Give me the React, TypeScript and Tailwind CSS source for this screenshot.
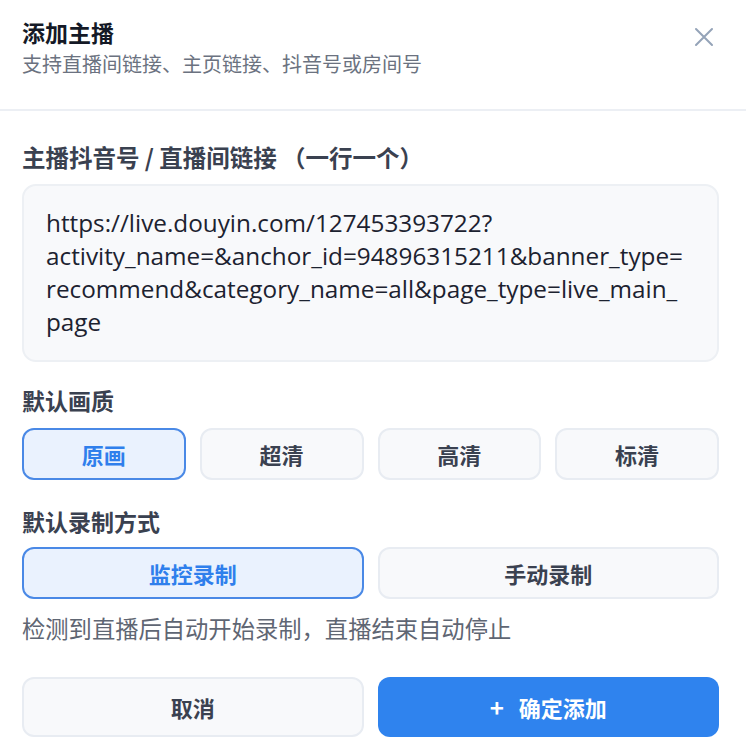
import React from "react";

const cjk = { fontFamily: '"Noto Sans CJK SC", "Noto Sans", sans-serif' };
const mono = { fontFamily: '"Open Sans", "Noto Sans CJK SC", sans-serif' };

function Opt({ label, active }: { label: string; active?: boolean }) {
  return (
    <button
      className={
        active
          ? "h-[52px] rounded-[12px] border-2 border-[#4a89e6] bg-[#eaf2fe] text-[#2f7fec] text-[22px] font-bold leading-none flex items-center justify-center"
          : "h-[52px] rounded-[12px] border-2 border-[#e8ecf2] bg-[#f8f9fb] text-[#3a4150] text-[22px] font-bold leading-none flex items-center justify-center"
      }
    >
      {label}
    </button>
  );
}

export default function App() {
  const lines = [
    "https://live.douyin.com/127453393722?",
    "activity_name=&anchor_id=94896315211&banner_type=",
    "recommend&category_name=all&page_type=live_main_",
    "page",
  ];
  return (
    <div className="w-[746px] h-[754px] bg-white flex flex-col" style={cjk}>
      <div className="flex justify-between pl-[22px] pr-[32px] pt-[17px] pb-[31px] border-b-2 border-[#eceff4]">
        <div className="flex flex-col">
          <div className="text-[23px] leading-[30px] font-bold text-[#141926]">添加主播</div>
          <div className="mt-[3px] text-[20px] leading-[28px] text-[#6b7280]">
            支持直播间链接、主页链接、抖音号或房间号
          </div>
        </div>
        <div className="pt-[10px]">
          <svg width="20" height="20" viewBox="0 0 20 20" fill="none">
            <path d="M2 2 L18 18 M18 2 L2 18" stroke="#94a3b8" strokeWidth="2" strokeLinecap="round" />
          </svg>
        </div>
      </div>

      <div className="flex flex-col pl-[22px] pr-[27px] pt-[31px]">
        <div className="text-[23.5px] leading-[30px] font-bold text-[#3a4150]">
          主播抖音号 / 直播间链接 （一行一个）
        </div>
        <div
          className="mt-[12px] h-[178px] rounded-[14px] border-2 border-[#edf0f4] bg-[#f8f9fb] pl-[22px] pt-[20px] text-[24.3px] leading-[33px] text-[#1c2230]"
          style={mono}
        >
          {lines.map((l, i) => (
            <div key={i} className="whitespace-pre">
              {l}
            </div>
          ))}
        </div>

        <div className="mt-[23px] text-[23px] leading-[30px] font-bold text-[#3a4150]">默认画质</div>
        <div className="mt-[13px] grid grid-cols-4 gap-[14px]">
          <Opt label="原画" active />
          <Opt label="超清" />
          <Opt label="高清" />
          <Opt label="标清" />
        </div>

        <div className="mt-[26px] text-[23px] leading-[30px] font-bold text-[#3a4150]">默认录制方式</div>
        <div className="mt-[11px] grid grid-cols-2 gap-[14px]">
          <Opt label="监控录制" active />
          <Opt label="手动录制" />
        </div>

        <div className="mt-[14px] text-[23.3px] leading-[30px] text-[#5f6673]">
          检测到直播后自动开始录制，直播结束自动停止
        </div>

        <div className="mt-[34px] grid grid-cols-2 gap-[14px]">
          <button className="h-[60px] rounded-[12px] border-2 border-[#e8ecf2] bg-[#f8f9fb] text-[#3a4150] text-[22px] font-bold flex items-center justify-center">
            取消
          </button>
          <button className="h-[60px] rounded-[12px] bg-[#2f83ee] text-white text-[22px] font-bold flex items-center justify-center gap-[15px]">
            <span className="text-[24px] leading-none">+</span>
            <span>确定添加</span>
          </button>
        </div>
      </div>
    </div>
  );
}
